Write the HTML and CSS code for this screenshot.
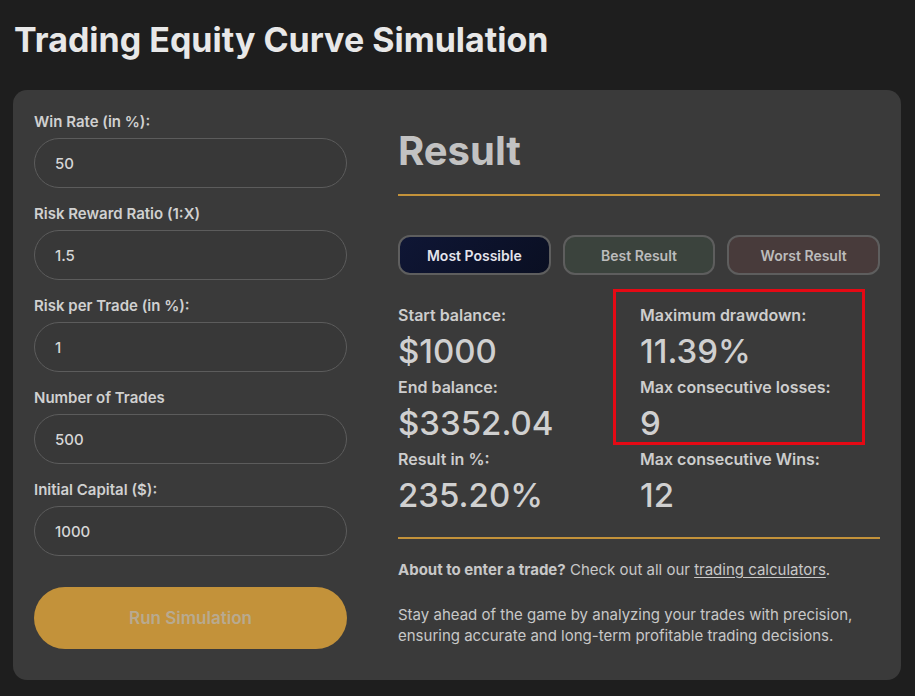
FILE: index.html
```html
<!DOCTYPE html>
<html>
<head>
<meta charset="utf-8">
<link rel="stylesheet" href="styles.css">
</head>
<body>
<h1 class="title">Trading Equity Curve Simulation</h1>
<div class="card">
  <form class="form">
    <div class="field">
      <label class="label">Win Rate (in %):</label>
      <div class="input">50</div>
    </div>
    <div class="field">
      <label class="label">Risk Reward Ratio (1:X)</label>
      <div class="input">1.5</div>
    </div>
    <div class="field">
      <label class="label">Risk per Trade (in %):</label>
      <div class="input">1</div>
    </div>
    <div class="field">
      <label class="label">Number of Trades</label>
      <div class="input">500</div>
    </div>
    <div class="field">
      <label class="label">Initial Capital ($):</label>
      <div class="input">1000</div>
    </div>
    <div class="run">Run Simulation</div>
  </form>
  <div class="result">
    <h2 class="result-title">Result</h2>
    <div class="rule"></div>
    <div class="tabs">
      <div class="tab tab-most">Most Possible</div>
      <div class="tab tab-best">Best Result</div>
      <div class="tab tab-worst">Worst Result</div>
    </div>
    <div class="stats">
      <div class="stat"><div class="stat-label">Start balance:</div><div class="stat-value">$1000</div></div>
      <div class="stat"><div class="stat-label">Maximum drawdown:</div><div class="stat-value">11.39%</div></div>
      <div class="stat"><div class="stat-label">End balance:</div><div class="stat-value">$3352.04</div></div>
      <div class="stat"><div class="stat-label">Max consecutive losses:</div><div class="stat-value">9</div></div>
      <div class="stat"><div class="stat-label">Result in %:</div><div class="stat-value">235.20%</div></div>
      <div class="stat"><div class="stat-label">Max consecutive Wins:</div><div class="stat-value">12</div></div>
      <div class="highlight"></div>
    </div>
    <div class="rule rule-bottom"></div>
    <p class="note"><strong>About to enter a trade?</strong> Check out all our <a class="link" href="#">trading calculators</a>.</p>
    <p class="note note-desc">Stay ahead of the game by analyzing your trades with precision, ensuring accurate and long-term profitable trading decisions.</p>
  </div>
</div>
</body>
</html>
```
FILE: styles.css
```css
html, body {
  margin: 0;
  padding: 0;
}
body {
  background: #1e1e1e;
  font-family: Inter, "Noto Sans", sans-serif;
  color: #d2d2d2;
  padding: 20px 14px 0 13px;
  width: 915px;
  box-sizing: border-box;
}
.title {
  margin: 0 0 0 1px;
  font-size: 34px;
  font-weight: 700;
  color: #e8e8e8;
  line-height: 40px;
}
.card {
  margin-top: 30px;
  width: 888px;
  height: 590px;
  box-sizing: border-box;
  background: #3a3a3a;
  border-radius: 14px;
  padding: 22px 20px 0 21px;
  display: flex;
  gap: 51px;
}
.form {
  width: 313px;
  display: flex;
  flex-direction: column;
  padding-top: 1px;
}
.field {
  display: flex;
  flex-direction: column;
  gap: 7px;
  margin-bottom: 17px;
}
.label {
  font-size: 15px;
  font-weight: 600;
  color: #d0d0d0;
  line-height: 18px;
}
.input {
  height: 50px;
  box-sizing: border-box;
  border: 1px solid #5c5c5c;
  border-radius: 25px;
  background: #383838;
  padding: 0 20px;
  display: flex;
  align-items: center;
  font-size: 15px;
  font-weight: 500;
  color: #d6d6d6;
}
.run {
  margin-top: 14px;
  height: 62px;
  border-radius: 31px;
  background: #c3923a;
  display: flex;
  align-items: center;
  justify-content: center;
  font-size: 17px;
  font-weight: 600;
  color: #b8aa90;
}
.result {
  width: 482px;
  display: flex;
  flex-direction: column;
}
.result-title {
  margin: 15px 0 0 0;
  font-size: 40px;
  font-weight: 700;
  color: #c2c2c2;
  line-height: 48px;
}
.rule {
  height: 2px;
  background: #c3923a;
  margin-top: 19px;
}
.tabs {
  margin-top: 39px;
  display: flex;
  gap: 12px;
}
.tab {
  flex: 1;
  height: 40px;
  box-sizing: border-box;
  border: 2px solid #5e5e5e;
  border-radius: 12px;
  display: flex;
  align-items: center;
  justify-content: center;
  font-size: 14px;
  font-weight: 600;
  color: #bcbcbc;
}
.tab-most {
  background: linear-gradient(135deg, #0f1635, #0a0f22);
  color: #e4e4ec;
}
.tab-best {
  background: #3b433d;
}
.tab-worst {
  background: #483b3b;
}
.stats {
  position: relative;
  margin-top: 30px;
  display: grid;
  grid-template-columns: 242px 240px;
}
.stat {
  display: flex;
  flex-direction: column;
  height: 72px;
}
.stat-label {
  font-size: 16px;
  font-weight: 600;
  color: #cdcdcd;
  line-height: 20px;
}
.stat-value {
  font-size: 33px;
  font-weight: 500;
  color: #d0d0d0;
  line-height: 36px;
  margin-top: 8px;
}
.highlight {
  position: absolute;
  left: 215px;
  top: -16px;
  width: 252px;
  height: 156px;
  box-sizing: border-box;
  border: 3px solid #e50914;
  pointer-events: none;
}
.rule-bottom {
  margin-top: 16px;
}
.note {
  margin: 20px 0 0 0;
  font-size: 15px;
  line-height: 21px;
  color: #c8c8c8;
}
.note strong {
  font-weight: 700;
}
.link {
  color: #c8c8c8;
  text-decoration: underline;
  text-underline-offset: 2px;
}
.note-desc {
  margin-top: 24px;
}
```
